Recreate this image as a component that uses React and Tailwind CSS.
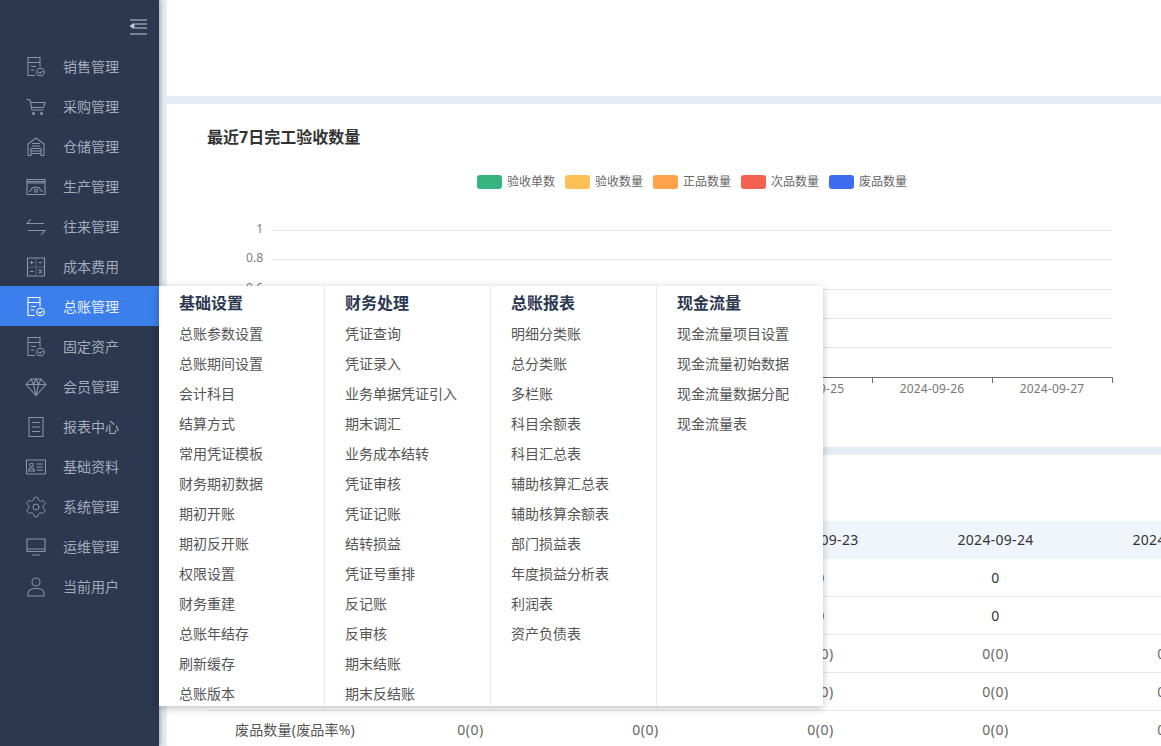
import { Settings } from "lucide-react";

const iconProps = {
  width: 22,
  height: 22,
  viewBox: "0 0 22 22",
  fill: "none",
  stroke: "currentColor",
  strokeWidth: 1.1,
};

const BillIcon = () => (
  <svg {...iconProps}>
    <path d="M15 10.500V1.500H3v18h7" />
    <path d="M3 6.500h12M6 10.500h5M6 14h3" />
    <circle cx="15.500" cy="16" r="3.800" />
    <path d="M13.700 16l1.400 1.400 2.300-2.400" />
  </svg>
);

const icons = {
  bill: <BillIcon />,
  cart: (
    <svg {...iconProps}>
      <path d="M1.500 3l3.500 1.200L7 14h11.500" />
      <path d="M5.500 6.500h14.500l-1.500 5H7" />
      <circle cx="8.500" cy="17.500" r="1" fill="currentColor" />
      <circle cx="16.500" cy="17.500" r="1" fill="currentColor" />
    </svg>
  ),
  store: (
    <svg {...iconProps}>
      <path d="M3 19.500V8l8-6 8 6v11.500h-3v-7H6v7z" />
      <path d="M7 7.500h8M7 10h8M6 15h10M6 17.500h10" />
    </svg>
  ),
  factory: (
    <svg {...iconProps}>
      <path d="M2 3.500h18v15H2z" />
      <path d="M2 5.500h18M2 7h18" />
      <path d="M4.500 16c0-1.500 1-2 1.800-2 .3-2 1.600-3 2.700-2.300 .8-1 2.800-1 3.500 0 1.300-.5 2.500.4 2.700 2.300 1 0 2 .6 2 2" />
      <circle cx="11" cy="14.800" r="1.500" />
    </svg>
  ),
  exchange: (
    <svg {...iconProps}>
      <path d="M6 3L2 7.500h17M16 19l4-4.500H3" />
    </svg>
  ),
  calc: (
    <svg {...iconProps} strokeWidth={1.2}>
      <path d="M2.500 2h17v18h-17z" />
      <path d="M11 2v18M2.500 11h17" strokeOpacity=".45" />
      <path d="M5 6.500h3.500M6.700 4.700v3.600M13.500 6.500H17M5 15.500h3.500M6.700 13.500h.1M6.700 17.500h.1M13.800 13.700l3 3.500M16.800 13.700l-3 3.500" />
    </svg>
  ),
  diamond: (
    <svg {...iconProps}>
      <path d="M6 3h10l5 5.500L11 19.500 1 8.500z" />
      <path d="M1 8.500h20M6 3l2.500 5.500L11 19.500l2.500-11L16 3M8.500 8.500L11 3l2.500 5.500" />
    </svg>
  ),
  report: (
    <svg {...iconProps}>
      <path d="M4 1.500h14v19H4zM7 6.500h8M7 11h8M7 15.500h8" />
    </svg>
  ),
  card: (
    <svg {...iconProps}>
      <path d="M1.500 4h19v14h-19z" />
      <circle cx="6.500" cy="9" r="1.800" />
      <path d="M3.500 15c.3-2 1.500-3 3-3s2.700 1 3 3zM11.500 8h6.500M11.500 11h6.500M11.500 14h6.500" />
    </svg>
  ),
  gear: <Settings size={24} strokeWidth={1} className="-mx-px" />,
  monitor: (
    <svg {...iconProps}>
      <path d="M2 3h18v12.500H2zM2 13h18M7 19h8" />
    </svg>
  ),
  user: (
    <svg {...iconProps}>
      <circle cx="11" cy="6" r="4" />
      <path d="M3 20v-2.500c0-3 3-5 8-5s8 2 8 5V20z" />
    </svg>
  ),
};

const navItems = [
  { name: "销售管理", icon: "bill" },
  { name: "采购管理", icon: "cart" },
  { name: "仓储管理", icon: "store" },
  { name: "生产管理", icon: "factory" },
  { name: "往来管理", icon: "exchange" },
  { name: "成本费用", icon: "calc" },
  { name: "总账管理", icon: "bill", active: true },
  { name: "固定资产", icon: "bill" },
  { name: "会员管理", icon: "diamond" },
  { name: "报表中心", icon: "report" },
  { name: "基础资料", icon: "card" },
  { name: "系统管理", icon: "gear" },
  { name: "运维管理", icon: "monitor" },
  { name: "当前用户", icon: "user" },
];

const menuColumns = [
  {
    title: "基础设置",
    items: ["总账参数设置", "总账期间设置", "会计科目", "结算方式", "常用凭证模板", "财务期初数据", "期初开账", "期初反开账", "权限设置", "财务重建", "总账年结存", "刷新缓存", "总账版本"],
  },
  {
    title: "财务处理",
    items: ["凭证查询", "凭证录入", "业务单据凭证引入", "期末调汇", "业务成本结转", "凭证审核", "凭证记账", "结转损益", "凭证号重排", "反记账", "反审核", "期末结账", "期末反结账"],
  },
  {
    title: "总账报表",
    items: ["明细分类账", "总分类账", "多栏账", "科目余额表", "科目汇总表", "辅助核算汇总表", "辅助核算余额表", "部门损益表", "年度损益分析表", "利润表", "资产负债表"],
  },
  {
    title: "现金流量",
    items: ["现金流量项目设置", "现金流量初始数据", "现金流量数据分配", "现金流量表"],
  },
];

const legend = [
  { name: "验收单数", color: "bg-[#36b37e]" },
  { name: "验收数量", color: "bg-[#fdc057]" },
  { name: "正品数量", color: "bg-[#ffa24c]" },
  { name: "次品数量", color: "bg-[#f5614f]" },
  { name: "废品数量", color: "bg-[#3d6cf0]" },
];

const dates = ["2024-09-21", "2024-09-22", "2024-09-23", "2024-09-24", "2024-09-25"];
const rows = [
  { name: "验收单数", value: "0", dark: true },
  { name: "验收数量", value: "0", dark: true },
  { name: "正品数量(正品率%)", value: "0(0)" },
  { name: "次品数量(次品率%)", value: "0(0)" },
  { name: "废品数量(废品率%)", value: "0(0)" },
];

const yLabels = [
  { label: "1", y: 11.5 },
  { label: "0.8", y: 40.5 },
  { label: "0.6", y: 70.5 },
  { label: "0.4", y: 99.5 },
  { label: "0.2", y: 128.5 },
  { label: "0", y: 158.5 },
];
const xDates = ["2024-09-21", "2024-09-22", "2024-09-23", "2024-09-24", "2024-09-25", "2024-09-26", "2024-09-27"];

const Chart = () => (
  <svg width="994" height="190" className="block">
    {yLabels.map(({ label, y }, i) => (
      <g key={label}>
        <text x="96" y={y + 2} textAnchor="end" fontSize="12" fill="#808080">
          {label}
        </text>
        {i < 5 && <line x1="105" x2="945" y1={y} y2={y} stroke="#e4e4e4" />}
      </g>
    ))}
    <line x1="105" x2="945.500" y1="158.500" y2="158.500" stroke="#6e6e6e" />
    {[0, 1, 2, 3, 4, 5, 6, 7].map((i) => (
      <line key={i} x1={105.500 + i * 120} x2={105.500 + i * 120} y1="158.500" y2="164" stroke="#6e6e6e" />
    ))}
    {xDates.map((d, i) => (
      <text key={d} x={165 + i * 120} y="174" textAnchor="middle" fontSize="12" letterSpacing="0.2" fill="#777">
        {d}
      </text>
    ))}
  </svg>
);

const App = () => {
  return (
    <div className="relative flex h-[746px] w-[1161px] overflow-hidden bg-[#e6ecf3] font-['Noto_Sans','Noto_Sans_CJK_SC',sans-serif]">
      <aside className="w-[159px] shrink-0 bg-[#2b3850] shadow-[2px_0_4px_rgba(0,0,0,0.25)]">
        <div className="flex h-[46px] items-start justify-end pr-[12px] pt-[19px]">
          <svg width="18" height="16" viewBox="0 0 18 16" fill="none" stroke="#c3c9d4" strokeWidth="1">
            <path d="M1 1h17M6 5h12M6 9h12M1 15h17" />
            <path d="M1 7l4-2.500v5z" fill="#c3c9d4" />
          </svg>
        </div>
        {navItems.map((item) => (
          <div
            key={item.name}
            className={`flex h-10 items-center pl-[25px] pt-[2px] text-sm ${
              item.active ? "bg-[#3b7fec] text-[#e8eefb]" : "text-[#a4abb9]"
            }`}
          >
            <span className={`flex w-[22px] justify-center ${item.active ? "text-white" : "text-[#8b93a5]"}`}>
              {icons[item.icon]}
            </span>
            <span className="ml-4">{item.name}</span>
          </div>
        ))}
      </aside>

      <main className="min-w-0 flex-1 pl-2">
        <div className="h-[96px] bg-white"></div>

        <section className="mt-2 h-[343px] bg-white">
          <h2 className="pl-10 pt-[21px] text-base leading-[24px] font-bold text-[#333]">最近7日完工验收数量</h2>
          <div className="mt-[26px] ml-[310px] flex h-[14px] items-center gap-[10px]">
            {legend.map((l) => (
              <div key={l.name} className="flex items-center gap-[5px]">
                <span className={`h-[14px] w-[25px] rounded-[3px] ${l.color}`}></span>
                <span className="text-xs whitespace-nowrap text-[#666]">{l.name}</span>
              </div>
            ))}
          </div>
          <div className="mt-[30px]">
            <Chart />
          </div>
        </section>

        <section className="mt-2 h-[300px] bg-white pl-10">
          <h2 className="pt-[20px] text-base leading-[24px] font-bold text-[#333]">最近7日完工验收明细</h2>
          <div className="mt-[22px] w-[1100px] text-sm">
            <div className="flex h-[38px] items-center bg-[#f0f5fc] text-[#333] tracking-[0.3px]">
              <div className="w-[176px] text-center">日期</div>
              {dates.map((d) => (
                <div key={d} className="w-[175px] text-center">
                  {d}
                </div>
              ))}
            </div>
            {rows.map((row) => (
              <div key={row.name} className="flex h-[38px] items-center border-b border-[#e8e8e8]">
                <div className="w-[176px] text-center tracking-[0.2px] text-[#555]">{row.name}</div>
                {dates.map((d) => (
                  <div key={d} className={`w-[175px] text-center tracking-[0.5px] ${row.dark ? "text-[#333]" : "text-[#666]"}`}>
                    {row.value}
                  </div>
                ))}
              </div>
            ))}
          </div>
        </section>
      </main>

      <div className="absolute top-[286px] left-[159px] flex h-[420px] w-[664px] overflow-hidden bg-white shadow-[0_2px_8px_rgba(0,0,0,0.25)]">
        {menuColumns.map((col) => (
          <div key={col.title} className="w-[166px] shrink-0 border-r border-[#e8e8e8] pl-5 last:border-r-0">
            <div className="h-[33px] text-base leading-[34px] font-bold text-[#2b3850]">{col.title}</div>
            {col.items.map((item) => (
              <div key={item} className="h-[30px] text-sm leading-[30px] whitespace-nowrap text-[#555]">
                {item}
              </div>
            ))}
          </div>
        ))}
      </div>
    </div>
  );
};

export default App;
